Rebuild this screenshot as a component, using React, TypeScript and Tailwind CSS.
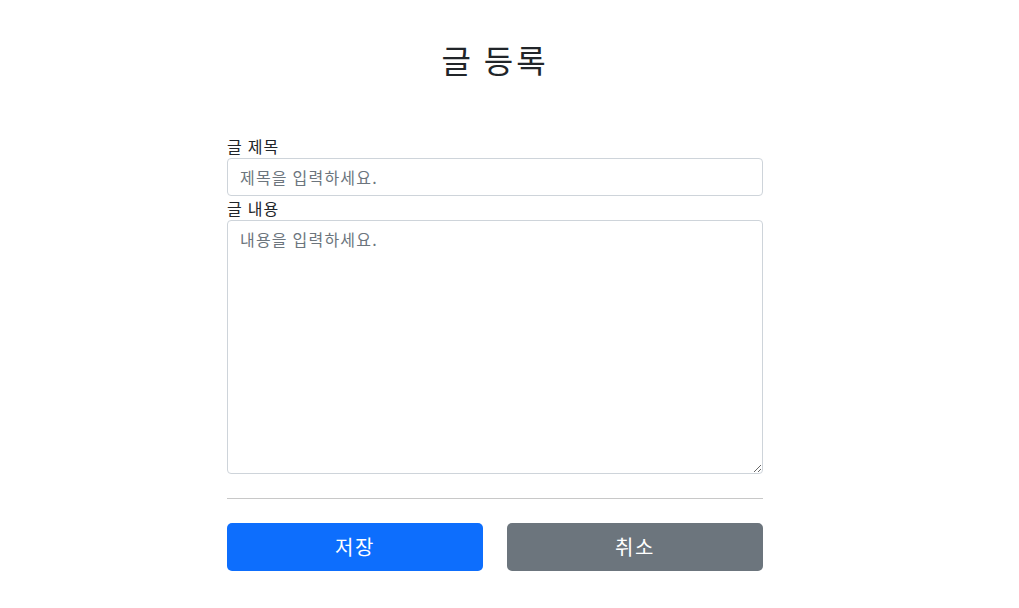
import React from 'react';

const font = { fontFamily: '"Noto Sans CJK KR", "Noto Sans", sans-serif' };

export default function App() {
  return (
    <div className="min-h-screen bg-white text-[#212529] tracking-[0.075em]" style={font}>
      <div className="w-[536px] ml-[227px] pt-[40px]">
        <h2 className="text-center text-[32px] leading-[38px] font-normal mb-[56px] tracking-[0.09em]">글 등록</h2>
        <form onSubmit={(e) => e.preventDefault()}>
          <label className="block text-[16px] leading-[24px]">글 제목</label>
          <input
            type="text"
            placeholder="제목을 입력하세요."
            className="block w-full h-[38px] px-3 text-[16px] tracking-[0.075em] border border-[#ced4da] rounded-[4px] placeholder-[#6c757d] focus:outline-none"
          />
          <label className="block text-[16px] leading-[24px]">글 내용</label>
          <textarea
            placeholder="내용을 입력하세요."
            className="block w-full h-[254px] px-3 py-[6px] text-[16px] leading-[24px] tracking-[0.075em] border border-[#ced4da] rounded-[4px] placeholder-[#6c757d] focus:outline-none"
          />
          <hr className="mt-[24px] mb-[24px] border-t border-[#c8c8c8]" />
          <div className="flex gap-6">
            <button type="submit" className="flex-1 h-[48px] bg-[#0d6efd] text-white text-[20px] tracking-[0.075em] rounded-[5px]">저장</button>
            <button type="button" className="flex-1 h-[48px] bg-[#6c757d] text-white text-[20px] tracking-[0.075em] rounded-[5px]">취소</button>
          </div>
        </form>
      </div>
    </div>
  );
}
